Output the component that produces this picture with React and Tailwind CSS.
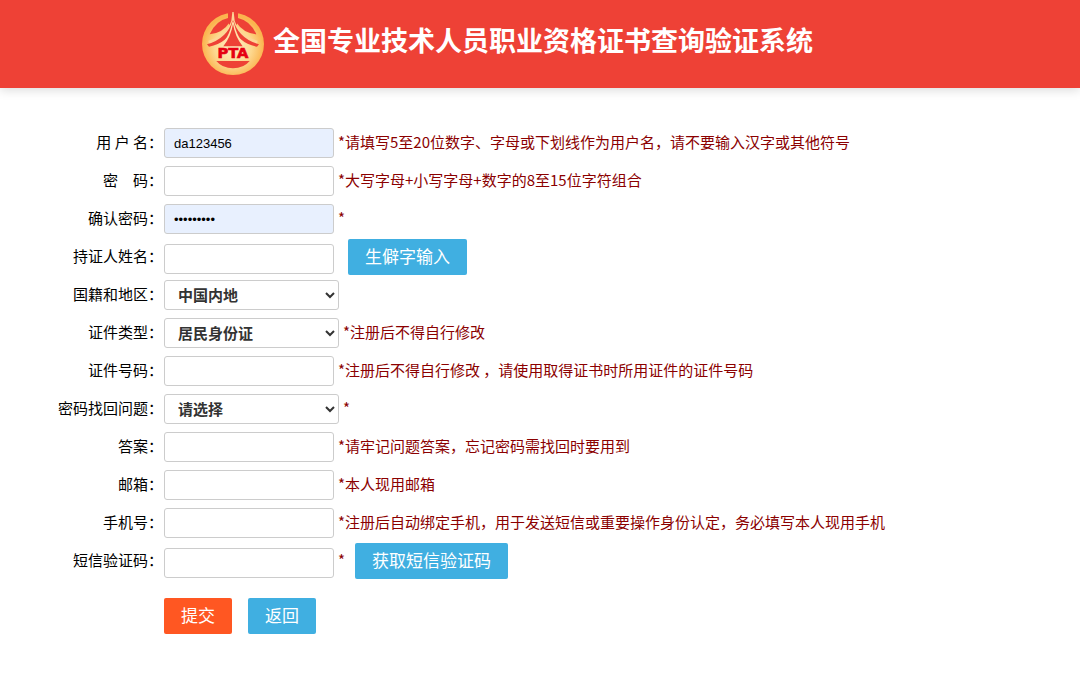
import { useState } from 'react';

const fields = [
  { id: 'username', label: '用 户 名：', hint: '*请填写5至20位数字、字母或下划线作为用户名，请不要输入汉字或其他符号', filled: true },
  { id: 'password', label: '密　码：', type: 'password', hint: '*大写字母+小写字母+数字的8至15位字符组合' },
  { id: 'confirm', label: '确认密码：', type: 'password', hint: '*', filled: true },
  { id: 'realname', label: '持证人姓名：', action: '生僻字输入' },
  { id: 'region', label: '国籍和地区：', options: ['中国内地'] },
  { id: 'idType', label: '证件类型：', options: ['居民身份证'], hint: '*注册后不得自行修改' },
  { id: 'idNumber', label: '证件号码：', hint: '*注册后不得自行修改 ，请使用取得证书时所用证件的证件号码' },
  { id: 'question', label: '密码找回问题：', options: ['请选择'], hint: '*' },
  { id: 'answer', label: '答案：', hint: '*请牢记问题答案，忘记密码需找回时要用到' },
  { id: 'email', label: '邮箱：', hint: '*本人现用邮箱' },
  { id: 'mobile', label: '手机号：', hint: '*注册后自动绑定手机，用于发送短信或重要操作身份认定，务必填写本人现用手机' },
  { id: 'smsCode', label: '短信验证码：', hint: '*', action: '获取短信验证码' },
];

function Logo() {
  return (
    <svg className="size-16 shrink-0" viewBox="0 0 192 192" aria-hidden="true">
      <defs>
        <radialGradient id="gold" cx="0.5" cy="0.55">
          <stop offset="0" stopColor="#ffeec4" />
          <stop offset="0.6" stopColor="#fdd88f" />
          <stop offset="1" stopColor="#fbb44e" />
        </radialGradient>
      </defs>
      <circle cx="96" cy="96" r="93" fill="url(#gold)" />
      {/* gap round the spire and the two leaves */}
      <path d="M81 0 H111 V30 L96 60 L81 30 Z" fill="#ee4136" />
      <path d="M26 67 Q44 26 81 18 L85 32 Q66 62 26 67 Z" fill="#ee4136" />
      <path d="M166 67 Q148 26 111 18 L107 32 Q126 62 166 67 Z" fill="#ee4136" />
      {/* spire and roof lines */}
      <path d="M94 0 H98 L101 26 Q116 70 170 86 L168 96 Q118 88 96 44 Q74 88 24 96 L22 86 Q76 70 91 26 Z" fill="#fdd596" />
      <path d="M94 26 Q80 78 18 97 L24 104 Q82 92 96 44 Q110 92 168 104 L174 97 Q112 78 98 26 Z" fill="#ee4136" />
      <path d="M96 24 L104 52 Q112 78 130 98 L122 104 Q106 76 96 46 Q86 76 70 104 L62 98 Q80 78 88 52 Z" fill="#ffe2ab" />
      <path d="M96 36 Q102 74 125 103 H67 Q90 74 96 36 Z" fill="#ee4136" />
      <path d="M46 147 H146 Q128 169 96 169 Q64 169 46 147 Z" fill="#ee4136" />
      <text x="96" y="138" textAnchor="middle" className="font-['DejaVu_Sans',sans-serif] text-[44px] font-bold" fill="#e60012" stroke="#e60012" strokeWidth="2">
        PTA
      </text>
    </svg>
  );
}

function ActionButton({ className = '', children, ...props }) {
  return (
    <button className={`h-9 rounded-xs px-[17px] pb-0.5 text-[17px] text-white cursor-pointer ${className}`} {...props}>
      {children}
    </button>
  );
}

function FormRow({ field, value, onChange }) {
  const { id, label, type = 'text', hint, options, action, filled } = field;

  return (
    <div className="flex h-[38px] items-center">
      <label htmlFor={id} className="mr-px w-[163px] shrink-0 pb-0.5 text-right whitespace-nowrap">
        {label}
      </label>
      {options ? (
        <select
          id={id}
          value={value}
          onChange={onChange}
          className="h-[30px] w-[175px] shrink-0 rounded-[3px] border border-[#ccc] bg-white pb-0.5 pl-[9px] font-bold text-[#333]"
        >
          {options.map((option) => (
            <option key={option}>{option}</option>
          ))}
        </select>
      ) : (
        <input
          id={id}
          type={type}
          value={value}
          onChange={onChange}
          className={`h-[30px] w-[170px] shrink-0 rounded-[3px] border border-[#ccc] px-[9px] font-['Liberation_Sans',sans-serif] text-[13px] ${filled ? 'bg-[#e8f0fe]' : 'bg-white'} ${action ? 'mt-1' : ''}`}
        />
      )}
      <span className="ml-1 pb-0.5 text-[#8b0000]">{hint}</span>
      {action && (
        <ActionButton type="button" className="ml-2.5 bg-[#40afe1]">
          {action}
        </ActionButton>
      )}
    </div>
  );
}

export default function App() {
  const [values, setValues] = useState({
    username: 'da123456',
    confirm: 'da1234567',
    region: '中国内地',
    idType: '居民身份证',
    question: '请选择',
  });

  const handleChange = (id) => (e) => {
    setValues({ ...values, [id]: e.target.value });
  };

  return (
    <div className="min-h-screen bg-white font-['Noto_Sans_CJK_SC',sans-serif] text-[15px] text-black">
      {/* Header */}
      <header className="bg-[#ee4136] shadow-[0_2px_10px_rgba(0,0,0,0.15)]">
        <div className="mx-auto flex h-[88px] max-w-[678px] items-center gap-2">
          <Logo />
          <h1 className="pb-2 text-[27px] font-bold whitespace-nowrap text-white">
            全国专业技术人员职业资格证书查询验证系统
          </h1>
        </div>
      </header>

      {/* Register form */}
      <main className="pt-9 pb-9">
        <form onSubmit={(e) => e.preventDefault()}>
          {fields.map((field) => (
            <FormRow
              key={field.id}
              field={field}
              value={values[field.id] || ''}
              onChange={handleChange(field.id)}
            />
          ))}
          <div className="mt-[18px] flex gap-4 pl-[164px]">
            <ActionButton type="submit" className="bg-[#ff5722]">提交</ActionButton>
            <ActionButton type="button" className="bg-[#40afe1]">返回</ActionButton>
          </div>
        </form>
      </main>
    </div>
  );
}
